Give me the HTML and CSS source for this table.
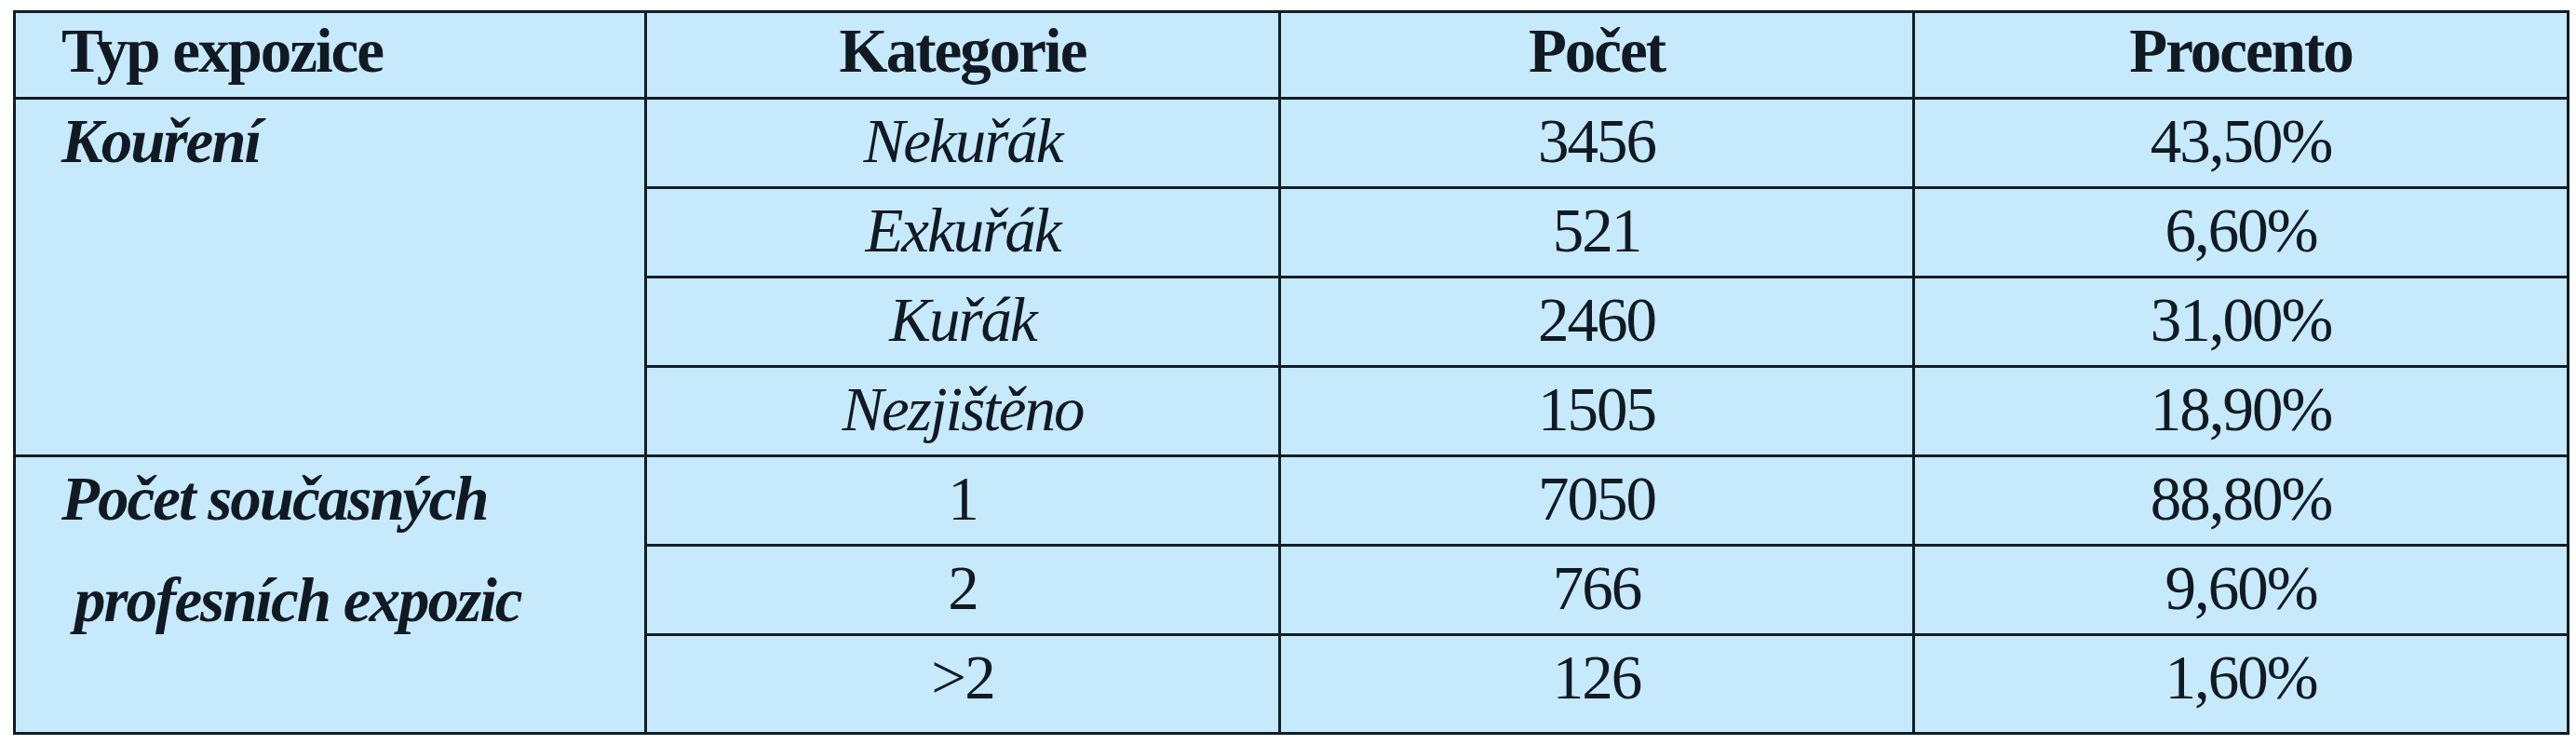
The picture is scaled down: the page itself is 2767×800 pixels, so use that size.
FILE: index.html
```html
<!DOCTYPE html>
<html lang="cs">
<head>
<meta charset="utf-8">
<title>Typ expozice</title>
<link rel="stylesheet" href="styles.css">
</head>
<body>
<table class="data">
  <colgroup>
    <col class="c1">
    <col class="c2">
    <col class="c3">
    <col class="c4">
  </colgroup>
  <thead>
    <tr class="head">
      <th class="first">Typ expozice</th>
      <th>Kategorie</th>
      <th>Počet</th>
      <th class="last">Procento</th>
    </tr>
  </thead>
  <tbody>
    <tr class="row">
      <td class="group" rowspan="4">Kouření</td>
      <td class="cat">Nekuřák</td>
      <td>3456</td>
      <td class="last">43,50%</td>
    </tr>
    <tr class="row">
      <td class="cat">Exkuřák</td>
      <td>521</td>
      <td class="last">6,60%</td>
    </tr>
    <tr class="row">
      <td class="cat">Kuřák</td>
      <td>2460</td>
      <td class="last">31,00%</td>
    </tr>
    <tr class="row">
      <td class="cat">Nezjištěno</td>
      <td>1505</td>
      <td class="last">18,90%</td>
    </tr>
    <tr class="row">
      <td class="group bottom" rowspan="3"><div>Počet současných</div><div class="second">profesních expozic</div></td>
      <td>1</td>
      <td>7050</td>
      <td class="last">88,80%</td>
    </tr>
    <tr class="row">
      <td>2</td>
      <td>766</td>
      <td class="last">9,60%</td>
    </tr>
    <tr class="row end">
      <td>&gt;2</td>
      <td>126</td>
      <td class="last">1,60%</td>
    </tr>
  </tbody>
</table>
</body>
</html>
```

FILE: styles.css
```css
html, body {
  margin: 0;
  padding: 0;
  background: #ffffff;
}

body {
  padding: 11px 0 0 14px;
}

.data {
  border-collapse: separate;
  border-spacing: 0;
  table-layout: fixed;
  width: 2746px;
  border: 3px solid #111d27;
  background: #c6e9fb;
  color: #111a22;
  font-family: "Liberation Serif", "Times New Roman", serif;
  font-size: 67px;
  line-height: 77px;
  letter-spacing: -2px;
}

.c1 { width: 678px; }
.c2 { width: 681px; }
.c3 { width: 681px; }
.c4 { width: 700px; }

.data th,
.data td {
  box-sizing: border-box;
  border-right: 3px solid #111d27;
  border-bottom: 3px solid #111d27;
  vertical-align: top;
  text-align: center;
  padding: 6px 0 0 0;
  white-space: nowrap;
  font-weight: normal;
}

.data th {
  font-weight: bold;
  padding-top: 2px;
}

.data .last {
  border-right: none;
}

.data .end td,
.data td.bottom {
  border-bottom: none;
}

.head { height: 93px; }
.row { height: 96px; }
.row.end { height: 103px; }

.data th.first {
  text-align: left;
  padding-left: 49px;
}

.data td.group {
  text-align: left;
  padding-left: 49px;
  font-weight: bold;
  font-style: italic;
  padding-top: 6px;
}

.group .second {
  margin-top: 32px;
  margin-left: 14px;
}

.data td.cat {
  font-style: italic;
}
```
